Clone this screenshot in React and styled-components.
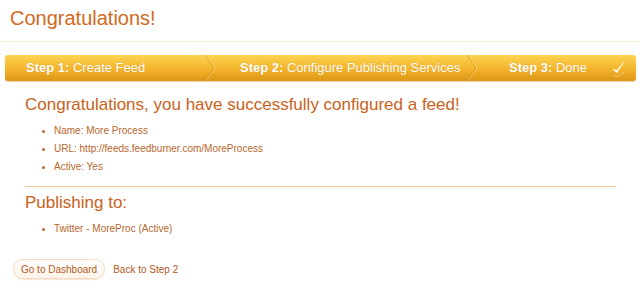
import styled, { createGlobalStyle } from "styled-components";

const GlobalStyle = createGlobalStyle`
  body {
    margin: 0;
    background: #fff;
    font-family: "Liberation Sans", Arial, sans-serif;
  }
`;

const Page = styled.div`
  width: 640px;
  height: 289px;
  overflow: hidden;
`;

const Header = styled.div`
  padding: 5px 10px 0;
  height: 36px;
  border-bottom: 1px solid #f6eddf;
`;

const Title = styled.h1`
  margin: 0;
  font-size: 20px;
  font-weight: normal;
  color: #d2691e;
  line-height: 26px;
`;

const Steps = styled.ol`
  list-style: none;
  margin: 13px 4px 0 5px;
  padding: 0;
  height: 26px;
  display: flex;
  border-radius: 3px;
  background: linear-gradient(#fdd352, #f3b42a 55%, #dc9614);
  box-shadow: 0 1px 1px rgba(180, 120, 20, 0.35);
  overflow: hidden;
`;

const Step = styled.li`
  position: relative;
  width: ${(p) => p.$w}px;
  padding-left: ${(p) => p.$pad}px;
  box-sizing: border-box;
  line-height: 26px;
  font-size: 13px;
  color: #fff;
  white-space: nowrap;
  text-shadow: 0 0 1px rgba(170, 100, 0, 0.4);

  b {
    font-weight: bold;
  }
`;

const Chevron = styled.svg`
  position: absolute;
  right: 0;
  top: 0;
`;

const Check = styled.svg`
  position: absolute;
  right: 8px;
  top: 3px;
`;

const Body = styled.div`
  padding: 13px 25px 0 25px;
`;

const Heading = styled.h2`
  margin: 0;
  font-size: 17px;
  font-weight: normal;
  color: #c9621b;
  line-height: 22px;
`;

const List = styled.ul`
  margin: 6px 0 0;
  padding-left: 29px;
  color: #b8672d;
  font-size: 10px;

  li {
    line-height: 18px;
  }

  li::marker {
    font-size: 9px;
  }
`;

const Divider = styled.div`
  margin-top: 10px;
  width: 591px;
  height: 1px;
  background: #efcc96;
`;

const SubHeading = styled(Heading)`
  margin-top: 5px;
`;

const Actions = styled.div`
  display: flex;
  align-items: center;
  gap: 8px;
  padding: 21px 0 0 13px;
`;

const Button = styled.button`
  font-family: inherit;
  font-size: 10px;
  color: #b05a1f;
  height: 20px;
  padding: 0 7px;
  border: 1px solid #f3dcc2;
  border-radius: 10px;
  background: linear-gradient(#ffffff, #fff4ea);
  box-shadow: 0 1px 1px rgba(230, 190, 150, 0.4);
`;

const BackLink = styled.a`
  font-size: 10px;
  color: #b05a1f;
  text-decoration: none;
`;

const ChevronMark = () => (
  <Chevron width="14" height="26" viewBox="0 0 14 26">
    <path d="M2 0 L11 13 L2 26" fill="none" stroke="#c98b16" strokeWidth="1" opacity="0.7" />
    <path d="M3 0 L12 13 L3 26" fill="none" stroke="#fde08a" strokeWidth="1" opacity="0.6" />
  </Chevron>
);

export default function App() {
  return (
    <Page>
      <GlobalStyle />
      <Header>
        <Title>Congratulations!</Title>
      </Header>
      <Steps>
        <Step $w={212} $pad={21}>
          <b>Step 1:</b> Create Feed
          <ChevronMark />
        </Step>
        <Step $w={262} $pad={23}>
          <b>Step 2:</b> Configure Publishing Services
          <ChevronMark />
        </Step>
        <Step $w={157} $pad={30}>
          <b>Step 3:</b> Done
          <Check width="18" height="20" viewBox="0 0 18 20">
            <path d="M2 11 L7 15 L16 1 L7 12 Z" fill="#fff" />
            <path d="M3 17 L7 19 L15 14" fill="none" stroke="#fff" strokeWidth="1" opacity="0.35" />
          </Check>
        </Step>
      </Steps>
      <Body>
        <Heading>Congratulations, you have successfully configured a feed!</Heading>
        <List>
          <li>Name: More Process</li>
          <li>URL: http://feeds.feedburner.com/MoreProcess</li>
          <li>Active: Yes</li>
        </List>
        <Divider />
        <SubHeading>Publishing to:</SubHeading>
        <List>
          <li>Twitter - MoreProc (Active)</li>
        </List>
      </Body>
      <Actions>
        <Button>Go to Dashboard</Button>
        <BackLink href="#">Back to Step 2</BackLink>
      </Actions>
    </Page>
  );
}
